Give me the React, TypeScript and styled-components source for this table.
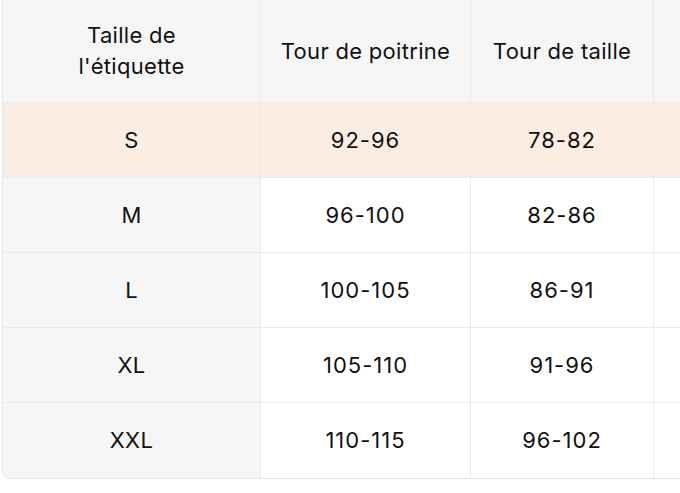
import React from "react";
import styled, { createGlobalStyle } from "styled-components";

const Global = createGlobalStyle`
  html, body { margin: 0; padding: 0; background: #ffffff; overflow: hidden; }
  body { font-family: Inter, "Noto Sans", "Liberation Sans", sans-serif; }
`;

const Page = styled.div`
  width: 680px;
  height: 493px;
  overflow: hidden;
  padding-left: 2px;
  box-sizing: border-box;
`;

const Frame = styled.div`
  width: 760px;
  margin-top: -1px;
  border: 1px solid #e6e6e6;
  border-radius: 0 0 7px 7px;
  overflow: hidden;
  box-sizing: border-box;
`;

const Grid = styled.div`
  display: grid;
  grid-template-columns: 258px 210px 183px 1fr;
`;

const Cell = styled.div<{ $head?: boolean; $first?: boolean; $hl?: boolean; $last?: boolean; $lastRow?: boolean }>`
  display: flex;
  align-items: center;
  justify-content: center;
  text-align: center;
  height: ${(p) => (p.$head ? "103px" : "75px")};
  box-sizing: border-box;
  border-right: ${(p) => (p.$last ? "none" : "1px solid #ebebeb")};
  border-bottom: ${(p) => (p.$lastRow ? "none" : "1px solid #ebebeb")};
  background: ${(p) => (p.$hl ? "#fcede3" : p.$head || p.$first ? "#f6f6f6" : "#ffffff")};
  color: #111111;
  font-size: 22px;
  line-height: 31px;
  padding: 0 10px;
  letter-spacing: ${(p) => (p.$head || p.$first ? "0.3px" : "1px")};
`;

const header = ["Taille de\nl'étiquette", "Tour de poitrine", "Tour de taille", ""];
const rows = [
  ["S", "92-96", "78-82", ""],
  ["M", "96-100", "82-86", ""],
  ["L", "100-105", "86-91", ""],
  ["XL", "105-110", "91-96", ""],
  ["XXL", "110-115", "96-102", ""],
];

const HeadText = styled.span`
  white-space: pre-line;
`;

export default function App() {
  return (
    <>
      <Global />
      <Page>
        <Frame>
          <Grid>
            {header.map((h, i) => (
              <Cell key={i} $head $last={i === 3}>
                <HeadText>{h}</HeadText>
              </Cell>
            ))}
            {rows.map((r, ri) =>
              r.map((c, ci) => (
                <Cell
                  key={`${ri}-${ci}`}
                  $first={ci === 0}
                  $hl={ri === 0}
                  $last={ci === 3}
                  $lastRow={ri === rows.length - 1}
                >
                  {c}
                </Cell>
              ))
            )}
          </Grid>
        </Frame>
      </Page>
    </>
  );
}
